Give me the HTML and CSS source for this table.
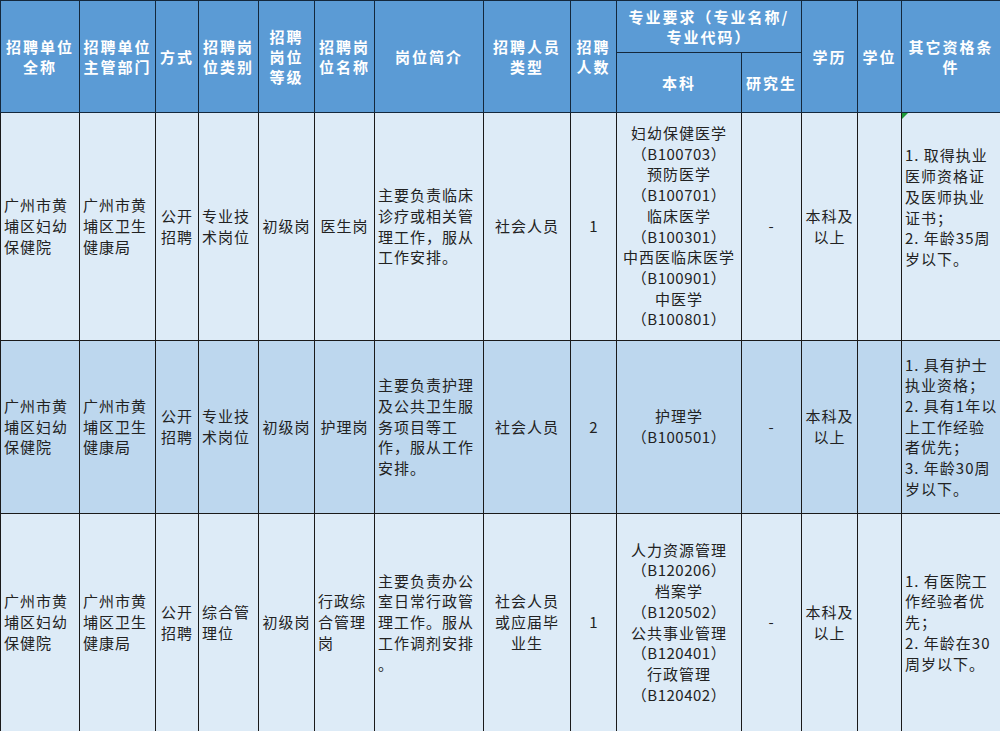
FILE: index.html
```html
<!DOCTYPE html>
<html lang="zh-CN">
<head>
<meta charset="utf-8">
<title>招聘岗位表</title>
<link rel="stylesheet" href="styles.css">
</head>
<body>
<table class="jobs">
  <colgroup>
    <col class="c1"><col class="c2"><col class="c3"><col class="c4"><col class="c5"><col class="c6"><col class="c7"><col class="c8"><col class="c9"><col class="c10"><col class="c11"><col class="c12"><col class="c13"><col class="c14">
  </colgroup>
  <thead>
    <tr class="head-top">
      <th rowspan="2">招聘单位<br>全称</th>
      <th rowspan="2">招聘单位<br>主管部门</th>
      <th rowspan="2">方式</th>
      <th rowspan="2">招聘岗<br>位类别</th>
      <th rowspan="2">招聘<br>岗位<br>等级</th>
      <th rowspan="2">招聘岗<br>位名称</th>
      <th rowspan="2">岗位简介</th>
      <th rowspan="2">招聘人员<br>类型</th>
      <th rowspan="2">招聘<br>人数</th>
      <th colspan="2">专业要求（专业名称/<br>专业代码）</th>
      <th rowspan="2">学历</th>
      <th rowspan="2">学位</th>
      <th rowspan="2">其它资格条<br>件</th>
    </tr>
    <tr class="head-sub">
      <th>本科</th>
      <th>研究生</th>
    </tr>
  </thead>
  <tbody>
    <tr class="row row-light row-1">
      <td class="left">广州市黄<br>埔区妇幼<br>保健院</td>
      <td class="left">广州市黄<br>埔区卫生<br>健康局</td>
      <td class="center">公开<br>招聘</td>
      <td class="left">专业技<br>术岗位</td>
      <td class="center">初级岗</td>
      <td class="center">医生岗</td>
      <td class="left">主要负责临床<br>诊疗或相关管<br>理工作，服从<br>工作安排。</td>
      <td class="center">社会人员</td>
      <td class="center num">1</td>
      <td class="center">妇幼保健医学<br><span class="code">（B100703）</span><br>预防医学<br><span class="code">（B100701）</span><br>临床医学<br><span class="code">（B100301）</span><br>中西医临床医学<br><span class="code">（B100901）</span><br>中医学<br><span class="code">（B100801）</span></td>
      <td class="center">-</td>
      <td class="center">本科及<br>以上</td>
      <td class="center"></td>
      <td class="left other raised"><span class="flag"></span>1. 取得执业<br>医师资格证<br>及医师执业<br>证书；<br>2. 年龄35周<br>岁以下。</td>
    </tr>
    <tr class="row row-mid row-2">
      <td class="left">广州市黄<br>埔区妇幼<br>保健院</td>
      <td class="left">广州市黄<br>埔区卫生<br>健康局</td>
      <td class="center">公开<br>招聘</td>
      <td class="left">专业技<br>术岗位</td>
      <td class="center">初级岗</td>
      <td class="center">护理岗</td>
      <td class="left">主要负责护理<br>及公共卫生服<br>务项目等工<br>作，服从工作<br>安排。</td>
      <td class="center">社会人员</td>
      <td class="center num">2</td>
      <td class="center">护理学<br><span class="code">（B100501）</span></td>
      <td class="center">-</td>
      <td class="center">本科及<br>以上</td>
      <td class="center"></td>
      <td class="left other">1. 具有护士<br>执业资格；<br>2. 具有1年以<br>上工作经验<br>者优先；<br>3. 年龄30周<br>岁以下。</td>
    </tr>
    <tr class="row row-light row-3">
      <td class="left">广州市黄<br>埔区妇幼<br>保健院</td>
      <td class="left">广州市黄<br>埔区卫生<br>健康局</td>
      <td class="center">公开<br>招聘</td>
      <td class="left">综合管<br>理位</td>
      <td class="center">初级岗</td>
      <td class="left">行政综<br>合管理<br>岗</td>
      <td class="left">主要负责办公<br>室日常行政管<br>理工作。服从<br>工作调剂安排<br>。</td>
      <td class="center">社会人员<br>或应届毕<br>业生</td>
      <td class="center num">1</td>
      <td class="center">人力资源管理<br><span class="code">（B120206）</span><br>档案学<br><span class="code">（B120502）</span><br>公共事业管理<br><span class="code">（B120401）</span><br>行政管理<br><span class="code">（B120402）</span></td>
      <td class="center">-</td>
      <td class="center">本科及<br>以上</td>
      <td class="center"></td>
      <td class="left other">1. 有医院工<br>作经验者优<br>先；<br>2. 年龄在30<br>周岁以下。</td>
    </tr>
  </tbody>
</table>
</body>
</html>
```

FILE: styles.css
```css
html, body {
  margin: 0;
  padding: 0;
  background: #ddebf7;
}

body {
  width: 1000px;
  height: 731px;
  overflow: hidden;
  font-family: "Noto Sans CJK SC", "Noto Sans", sans-serif;
}

.jobs {
  width: 1000px;
  border-collapse: collapse;
  table-layout: fixed;
}

.c1 { width: 79px; }
.c2 { width: 76px; }
.c3 { width: 43px; }
.c4 { width: 60px; }
.c5 { width: 56px; }
.c6 { width: 60px; }
.c7 { width: 109px; }
.c8 { width: 87px; }
.c9 { width: 46px; }
.c10 { width: 125px; }
.c11 { width: 60px; }
.c12 { width: 56px; }
.c13 { width: 44px; }
.c14 { width: 99px; }

.jobs th {
  background: #5b9bd5;
  color: #ffffff;
  font-weight: bold;
  font-size: 15px;
  line-height: 20px;
  letter-spacing: 2px;
  text-align: center;
  vertical-align: middle;
  border: 1px solid #14283c;
  padding: 0 2px;
  white-space: nowrap;
}

.head-top { height: 52px; }
.head-sub { height: 60px; }

.jobs td {
  font-size: 15px;
  line-height: 20.7px;
  letter-spacing: 1px;
  color: #222222;
  border: 1px solid #1a1a1a;
  vertical-align: middle;
  padding: 0 3px;
  white-space: nowrap;
}

.row-light td { background: #ddebf7; }
.row-mid td { background: #bdd7ee; }

.row-1 { height: 228px; }
.row-2 { height: 173px; }
.row-3 { height: 218px; }

.left { text-align: left; }
.center { text-align: center; }

.code {
  letter-spacing: 0.5px;
}

.jobs td.num {
  letter-spacing: 0;
}

.jobs td.other {
  position: relative;
  padding-left: 3px;
}

.jobs td.raised {
  padding-bottom: 38px;
}

.flag {
  position: absolute;
  left: 0;
  top: 0;
  width: 0;
  height: 0;
  border-top: 6px solid #1e9b3a;
  border-right: 6px solid transparent;
}
```
